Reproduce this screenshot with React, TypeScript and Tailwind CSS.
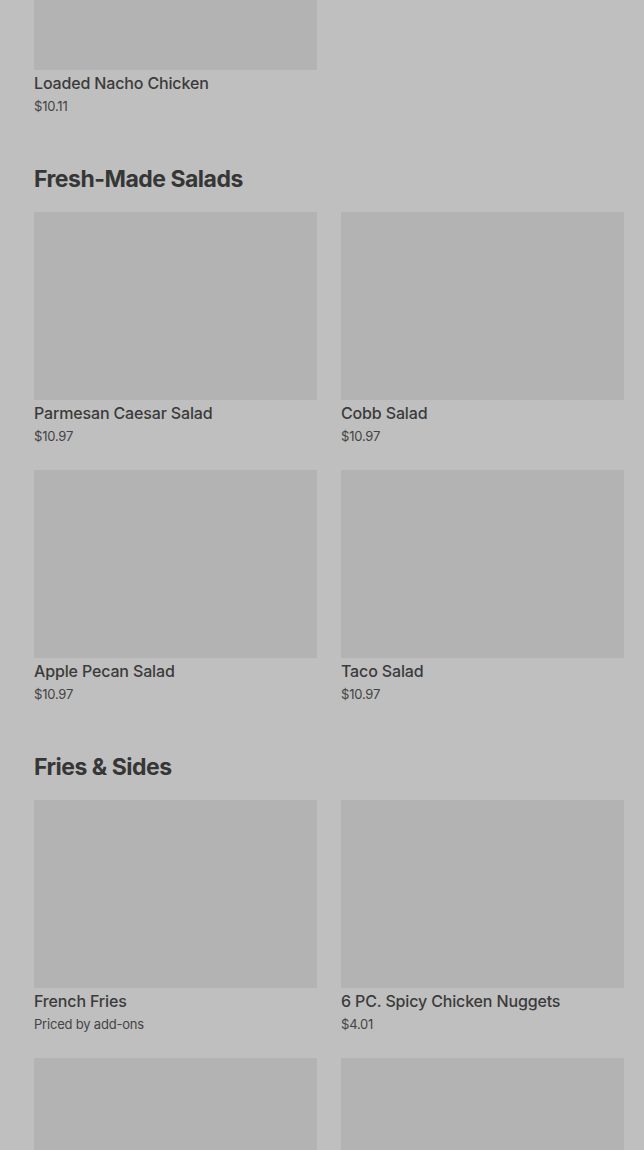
import React from "react";

type Item = { name: string; price: string };

const sections: { title: string; items: Item[] }[] = [
  {
    title: "Fresh-Made Salads",
    items: [
      { name: "Parmesan Caesar Salad", price: "$10.97" },
      { name: "Cobb Salad", price: "$10.97" },
      { name: "Apple Pecan Salad", price: "$10.97" },
      { name: "Taco Salad", price: "$10.97" },
    ],
  },
  {
    title: "Fries & Sides",
    items: [
      { name: "French Fries", price: "Priced by add-ons" },
      { name: "6 PC. Spicy Chicken Nuggets", price: "$4.01" },
      { name: "", price: "" },
      { name: "", price: "" },
    ],
  },
];

function Card({ item }: { item: Item }) {
  return (
    <div className="flex flex-col">
      <div className="h-[188px] bg-[#b3b3b3]" />
      <div className="mt-px text-[16px] leading-6 font-medium tracking-[-0.15px] text-[#3b3b3b]">{item.name}</div>
      <div className="text-[13px] leading-[22px] text-[#444444] tracking-[-0.2px]">{item.price}</div>
    </div>
  );
}

export default function App() {
  return (
    <div
      className="h-[1150px] w-[644px] overflow-hidden bg-[#bfbfbf]"
      style={{ fontFamily: "Inter, 'Noto Sans', sans-serif" }}
    >
      <div className="pl-[34px] pr-[20px] -mt-[118px]">
        <div className="grid grid-cols-2 gap-x-[24px]">
          <Card item={{ name: "Loaded Nacho Chicken", price: "$10.11" }} />
        </div>
        {sections.map((s) => (
          <div key={s.title} className="mt-[46px]">
            <h2 className="text-[23px] leading-8 font-bold tracking-[-0.5px] text-[#363636]">{s.title}</h2>
            <div className="mt-[17px] grid grid-cols-2 gap-x-[24px] gap-y-[23px]">
              {s.items.map((it, i) => (
                <Card key={i} item={it} />
              ))}
            </div>
          </div>
        ))}
      </div>
    </div>
  );
}
